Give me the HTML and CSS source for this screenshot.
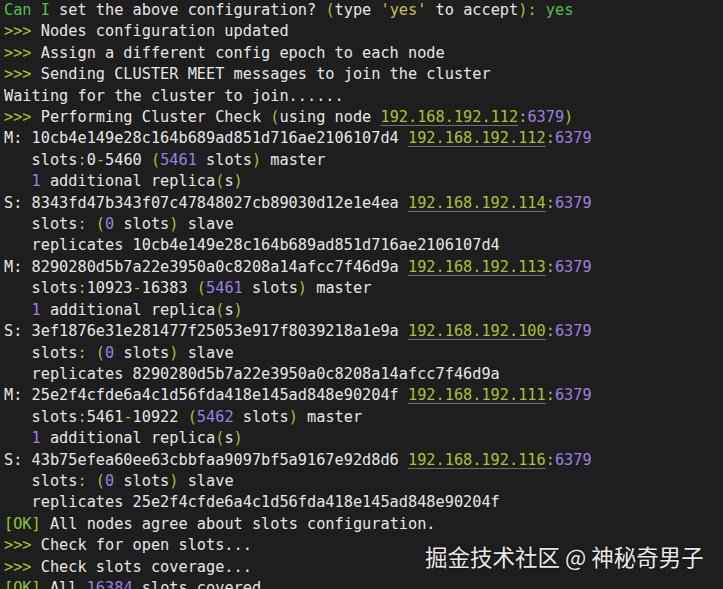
FILE: index.html
```html
<!DOCTYPE html>
<html>
<head>
<meta charset="utf-8">
<link rel="stylesheet" href="styles.css">
</head>
<body>
<pre class="term"><span class="g">Can I</span> set the above configuration? <span class="y">(</span>type <span class="q">'yes'</span> to accept<span class="y">):</span> <span class="g">yes</span>
<span class="y">&gt;&gt;&gt;</span> Nodes configuration updated
<span class="y">&gt;&gt;&gt;</span> Assign a different config epoch to each node
<span class="y">&gt;&gt;&gt;</span> Sending CLUSTER MEET messages to join the cluster
Waiting for the cluster to join......
<span class="y">&gt;&gt;&gt;</span> Performing Cluster Check <span class="y">(</span>using node <span class="ip">192.168.192.112</span><span class="y">:</span><span class="p">6379</span><span class="y">)</span>
M: 10cb4e149e28c164b689ad851d716ae2106107d4 <span class="ip">192.168.192.112</span><span class="y">:</span><span class="p">6379</span>
   slots<span class="y">:</span>0<span class="y">-</span>5460 <span class="y">(</span><span class="p">5461</span> slots<span class="y">)</span> master
   <span class="p">1</span> additional replica<span class="y">(</span>s<span class="y">)</span>
S: 8343fd47b343f07c47848027cb89030d12e1e4ea <span class="ip">192.168.192.114</span><span class="y">:</span><span class="p">6379</span>
   slots<span class="y">:</span> <span class="y">(</span><span class="p">0</span> slots<span class="y">)</span> slave
   replicates 10cb4e149e28c164b689ad851d716ae2106107d4
M: 8290280d5b7a22e3950a0c8208a14afcc7f46d9a <span class="ip">192.168.192.113</span><span class="y">:</span><span class="p">6379</span>
   slots<span class="y">:</span>10923<span class="y">-</span>16383 <span class="y">(</span><span class="p">5461</span> slots<span class="y">)</span> master
   <span class="p">1</span> additional replica<span class="y">(</span>s<span class="y">)</span>
S: 3ef1876e31e281477f25053e917f8039218a1e9a <span class="ip">192.168.192.100</span><span class="y">:</span><span class="p">6379</span>
   slots<span class="y">:</span> <span class="y">(</span><span class="p">0</span> slots<span class="y">)</span> slave
   replicates 8290280d5b7a22e3950a0c8208a14afcc7f46d9a
M: 25e2f4cfde6a4c1d56fda418e145ad848e90204f <span class="ip">192.168.192.111</span><span class="y">:</span><span class="p">6379</span>
   slots<span class="y">:</span>5461<span class="y">-</span>10922 <span class="y">(</span><span class="p">5462</span> slots<span class="y">)</span> master
   <span class="p">1</span> additional replica<span class="y">(</span>s<span class="y">)</span>
S: 43b75efea60ee63cbbfaa9097bf5a9167e92d8d6 <span class="ip">192.168.192.116</span><span class="y">:</span><span class="p">6379</span>
   slots<span class="y">:</span> <span class="y">(</span><span class="p">0</span> slots<span class="y">)</span> slave
   replicates 25e2f4cfde6a4c1d56fda418e145ad848e90204f
<span class="y">[</span><span class="ok">OK</span><span class="y">]</span> All nodes agree about slots configuration.
<span class="y">&gt;&gt;&gt;</span> Check for open slots...
<span class="y">&gt;&gt;&gt;</span> Check slots coverage...
<span class="y">[</span><span class="ok">OK</span><span class="y">]</span> All <span class="p">16384</span> slots covered.</pre>
<div class="watermark">掘金技术社区 @ 神秘奇男子</div>
</body>
</html>
```
FILE: styles.css
```css
html, body {
  margin: 0;
  padding: 0;
  background: #1e1e1e;
  width: 723px;
  height: 589px;
  overflow: hidden;
}
body {
  position: relative;
}
.term {
  margin: 0;
  padding: 0 0 0 4px;
  font-family: "DejaVu Sans Mono", "Liberation Mono", monospace;
  font-size: 15.25px;
  line-height: 21.4px;
  color: #e6e6e6;
  white-space: pre;
}
.g { color: #4cc34c; }
.y { color: #a9c232; }
.q { color: #c9bf55; }
.p { color: #9c7fe0; }
.ok { color: #8cc43a; }
.ip {
  color: #a9c232;
  text-decoration: underline;
  text-decoration-color: #6e6e6e;
  text-underline-offset: 3px;
}
.watermark {
  position: absolute;
  left: 425px;
  top: 540px;
  font-family: "Noto Sans CJK SC", "Noto Sans", sans-serif;
  font-size: 22.5px;
  line-height: 32px;
  color: #e8e8e8;
  text-shadow: 0 0 2px rgba(0,0,0,0.8);
  white-space: nowrap;
}
```
